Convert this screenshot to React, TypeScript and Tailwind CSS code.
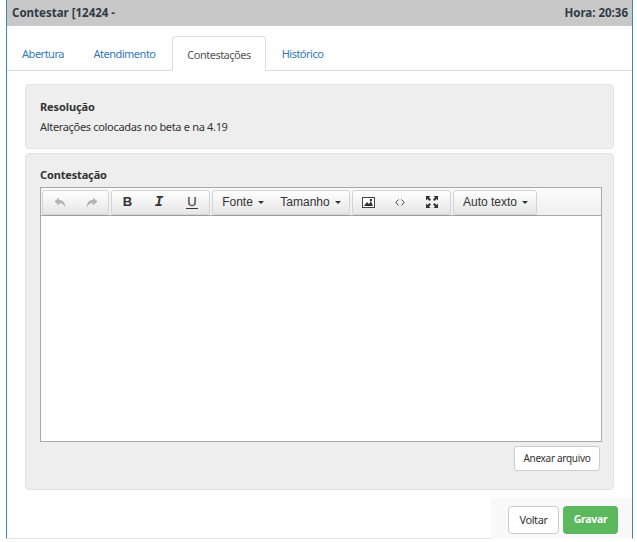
import React from 'react';

const tabs = ['Abertura', 'Atendimento', 'Contestações', 'Histórico'];

const Caret = () => <span className="ml-[5px] inline-block w-0 h-0 border-x-[3px] border-x-transparent border-t-[3px] border-t-[#333] align-middle" />;

const ToolGroup: React.FC<{ children: React.ReactNode }> = ({ children }) => (
  <div className="flex h-[25px] rounded-[3px] border border-[#d4d4d4] bg-gradient-to-b from-white to-[#e6e6e6] shadow-[0_1px_1px_rgba(0,0,0,0.08)]">{children}</div>
);

const ToolBtn: React.FC<{ className?: string; children: React.ReactNode }> = ({ className, children }) => (
  <div className={`flex items-center justify-center text-[#333] ${className ?? ''}`}>{children}</div>
);

export default function App() {
  return (
    <div className="w-[637px] h-[542px] bg-white overflow-hidden font-['Noto_Sans',sans-serif] text-[11px] text-[#333]">
      <div className="ml-[6px] mr-[4px] h-[539px] border-x border-x-[#3a87b8] border-b border-b-[#e2e2e2] flex flex-col">
        <div className="h-[26px] shrink-0 bg-[#c8c8c8] flex items-center justify-between pl-[5px] pr-[4px] font-bold text-[11.5px] text-[#2f3b45]">
          <span>Contestar [12424 -</span>
          <span>Hora: 20:36</span>
        </div>

        <div className="mt-[10px] h-[35px] shrink-0 flex items-end border-b border-[#dddddd] tracking-[-0.5px]">
          {tabs.map((t) => (
            <div
              key={t}
              className={
                t === 'Contestações'
                  ? 'h-[35px] w-[94px] mb-[-1px] ml-[2px] pt-[3px] flex items-center justify-center rounded-t-[4px] border border-[#dddddd] border-b-white bg-white text-[#555]'
                  : t === 'Abertura'
                    ? 'h-[34px] w-[72px] pt-[3px] flex items-center justify-center text-[#337ab7]'
                    : t === 'Atendimento'
                      ? 'h-[34px] w-[91px] pt-[3px] flex items-center justify-center text-[#337ab7]'
                      : 'h-[34px] w-[73px] pt-[3px] flex items-center justify-center text-[#337ab7]'
              }
            >
              {t}
            </div>
          ))}
        </div>

        <div className="mt-[13px] mx-[18px] h-[65px] shrink-0 rounded-[4px] border border-[#e3e3e3] bg-[#eeeeee] px-[14px] pt-[14px]">
          <div className="font-bold leading-[16px] tracking-[-0.1px]">Resolução</div>
          <div className="mt-[4px] leading-[16px] tracking-[-0.32px]">Alterações colocadas no beta e na 4.19</div>
        </div>

        <div className="mt-[4px] mx-[18px] h-[337px] shrink-0 rounded-[4px] border border-[#e3e3e3] bg-[#eeeeee] px-[14px] pt-[13px]">
          <div className="font-bold leading-[16px] tracking-[-0.15px]">Contestação</div>
          <div className="mt-[4px] mr-[-3px] h-[255px] border border-[#a9a9a9] bg-white flex flex-col">
            <div className="h-[28px] shrink-0 flex items-center gap-[2px] pl-[1px] pt-[1px] border-b border-[#a9a9a9] bg-gradient-to-b from-[#fbfbfb] to-[#f0f0f0] font-['Liberation_Sans',sans-serif] text-[12px]">
              <ToolGroup>
                <ToolBtn className="w-[33px]">
                  <svg width="12" height="11" viewBox="0 0 12 11" fill="#b4b4b4">
                    <path d="M0.500 4.500L5 0.500V3C9 3 11.500 5.500 11 10.500C10 7.500 8 6.200 5 6.200V8.500z" />
                  </svg>
                </ToolBtn>
                <ToolBtn className="w-[32px]">
                  <svg width="12" height="11" viewBox="0 0 12 11" fill="#b4b4b4">
                    <path d="M11.500 4.500L7 0.500V3C3 3 0.500 5.500 1 10.500C2 7.500 4 6.200 7 6.200V8.500z" />
                  </svg>
                </ToolBtn>
              </ToolGroup>
              <ToolGroup>
                <ToolBtn className="w-[31px] font-bold text-[13px]">B</ToolBtn>
                <ToolBtn className="w-[32px] font-['Liberation_Mono',monospace] font-bold italic text-[14px]">I</ToolBtn>
                <ToolBtn className="w-[34px]">
                  <span className="text-[13px] leading-[12px] border-b border-[#333] px-[1px]">U</span>
                </ToolBtn>
              </ToolGroup>
              <ToolGroup>
                <ToolBtn className="w-[59px] pl-[1px]">Fonte<Caret /></ToolBtn>
                <ToolBtn className="w-[77px]">Tamanho<Caret /></ToolBtn>
              </ToolGroup>
              <ToolGroup>
                <ToolBtn className="w-[30px]">
                  <svg width="13" height="11" viewBox="0 0 13 11">
                    <rect x="0.500" y="0.500" width="12" height="10" fill="#fff" stroke="#444" />
                    <path d="M2 9l3-4 2 2 2-3 2 5z" fill="#333" />
                    <rect x="8" y="2" width="2" height="2" fill="#333" />
                  </svg>
                </ToolBtn>
                <ToolBtn className="w-[33px]">
                  <svg width="10" height="7" viewBox="0 0 10 7" fill="none" stroke="#444">
                    <path d="M3.500 0.500L0.800 3.500L3.500 6.500M6.500 0.500L9.200 3.500L6.500 6.500" />
                  </svg>
                </ToolBtn>
                <ToolBtn className="w-[30px] ml-[1px] mr-[3px]">
                  <svg width="14" height="14" viewBox="0 0 14 14" fill="#333">
                    <path d="M1 1h4.500L4 2.500 6 4.500 4.500 6 2.500 4 1 5.500zM13 1v4.500L11.500 4 9.500 6 8 4.500 10 2.500 8.500 1zM1 13V8.500L2.500 10l2-2L6 9.500l-2 2L5.500 13zM13 13H8.500l1.500-1.500-2-2L9.500 8l2 2L13 8.500z" />
                  </svg>
                </ToolBtn>
              </ToolGroup>
              <ToolGroup>
                <ToolBtn className="w-[82px] pl-[1px]">Auto texto<Caret /></ToolBtn>
              </ToolGroup>
            </div>
          </div>
          <div className="mt-[4px] mr-[-1px] flex justify-end">
            <div className="h-[25px] w-[86px] flex items-center justify-center rounded-[3px] border border-[#cccccc] bg-white text-[10px] tracking-[-0.3px]">Anexar arquivo</div>
          </div>
        </div>

        <div className="mt-[8px] ml-auto w-[141px] h-[41px] shrink-0 bg-[#f9f9f9] flex items-start justify-end gap-[4px] pr-[14px] pt-[8px]">
          <div className="h-[28px] w-[51px] flex items-center justify-center rounded-[4px] border border-[#cccccc] bg-white tracking-[-0.4px]">Voltar</div>
          <div className="h-[28px] w-[55px] flex items-center justify-center rounded-[4px] bg-[#5cb85c] font-bold text-[10.5px] tracking-[-0.3px] text-white">Gravar</div>
        </div>
      </div>
    </div>
  );
}
